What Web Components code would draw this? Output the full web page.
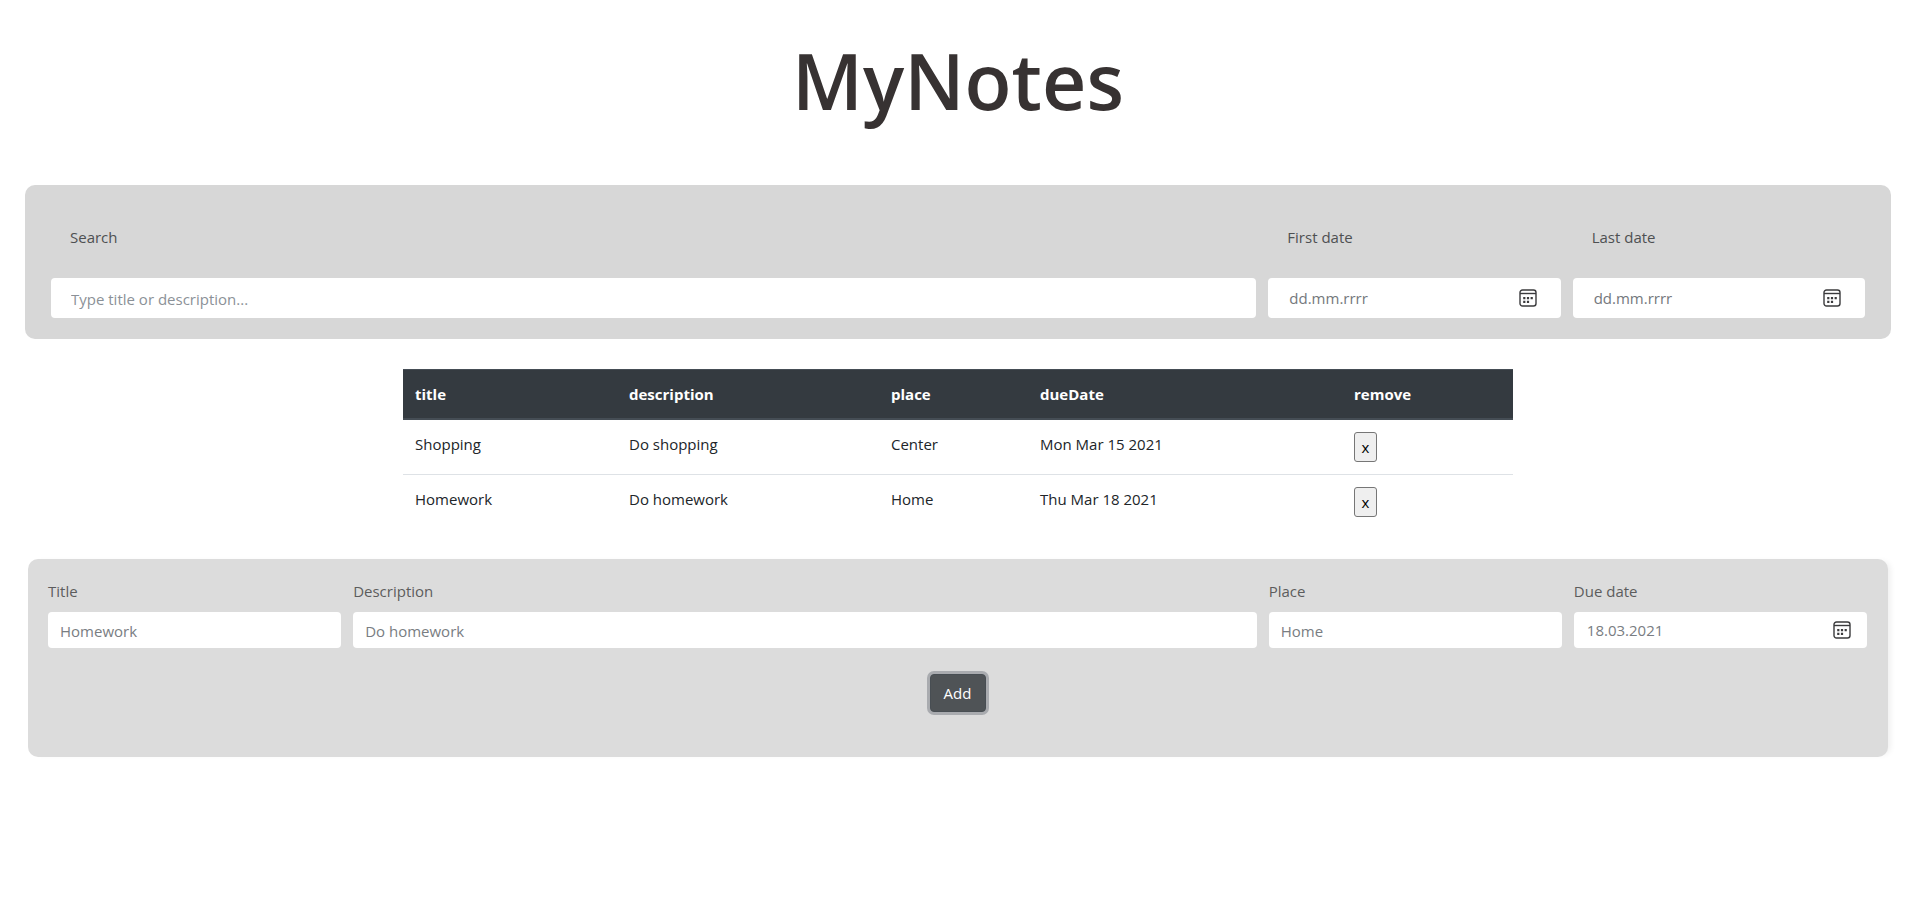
<!DOCTYPE html>
<html lang="en">
<head>
<meta charset="utf-8">
<meta name="viewport" content="width=device-width, initial-scale=1">
<title>MyNotes</title>
<style>
  body {
    margin: 0;
    background: #fff;
    color: #212529;
    font-family: "Open Sans", "Noto Sans", sans-serif;
    font-size: 15px;
    line-height: 24px;
  }
</style>
</head>
<body>
<notes-app></notes-app>

<template id="notes-app">
  <style>
    :host { display: block; padding: 33px 26px 40px 25px; }
    h1 {
      margin: 0 0 56px;
      font-size: 77px;
      line-height: 96px;
      font-weight: 600;
      text-align: center;
      color: #373232;
    }
    notes-table { margin: 30px auto; }
    .wide { grid-column: span 8; }
    .mid { grid-column: span 6; }
    .narrow { grid-column: span 2; }
    notes-panel.search { --panel-bg: #d7d7d7; --panel-padding: 40px 26px 21px; }
    notes-panel.search > * {
      --label-inset: 19px; --label-gap: 29px; --label-color: #4e5052;
      --field-height: 40px; --field-inset: 20px; --icon-inset: 24px;
    }
    notes-panel.add {
      --panel-bg: #dcdcdc; --panel-padding: 20px 21px 45px 20px;
      --panel-shadow: 5px 0 6px -3px #ededed;
      margin: 0 3px;
    }
    notes-panel.add > * { --label-color: #5c5c5d; }
  </style>
  <h1>MyNotes</h1>
  <notes-panel class="search">
    <text-field class="wide" label="Search" placeholder="Type title or description..."></text-field>
    <date-field class="narrow" label="First date" placeholder="dd.mm.rrrr"></date-field>
    <date-field class="narrow" label="Last date" placeholder="dd.mm.rrrr"></date-field>
  </notes-panel>
  <notes-table></notes-table>
  <notes-panel class="add">
    <text-field class="narrow" label="Title" value="Homework"></text-field>
    <text-field class="mid" label="Description" value="Do homework"></text-field>
    <text-field class="narrow" label="Place" value="Home"></text-field>
    <date-field class="narrow" label="Due date" value="18.03.2021"></date-field>
    <add-button slot="actions">Add</add-button>
  </notes-panel>
</template>

<template id="notes-panel">
  <style>
    :host {
      display: block;
      padding: var(--panel-padding);
      border-radius: 10px;
      background: var(--panel-bg);
      box-shadow: var(--panel-shadow, none);
    }
    .fields {
      display: grid;
      grid-template-columns: repeat(12, minmax(0, 1fr));
      column-gap: 12px;
    }
    .actions { display: flex; justify-content: center; }
  </style>
  <div class="fields"><slot></slot></div>
  <div class="actions"><slot name="actions"></slot></div>
</template>

<template id="text-field">
  <style>
    :host { display: block; }
    label {
      display: block;
      margin-bottom: var(--label-gap, 9px);
      padding-left: var(--label-inset, 0);
      color: var(--label-color);
    }
    .box {
      display: flex;
      align-items: center;
      box-sizing: border-box;
      height: var(--field-height, 36px);
      padding-right: var(--icon-inset, 16px);
      border-radius: 4px;
      background: #fff;
    }
    input {
      flex: 1;
      min-width: 0;
      height: 100%;
      box-sizing: border-box;
      margin: 0;
      border: 0;
      padding: 2px 0 0 var(--field-inset, 12px);
      background: none;
      font: inherit;
      color: #797d82;
      outline: none;
    }
    input::placeholder { color: #8b9197; opacity: 1; }
    .date input { padding-top: 0; padding-left: calc(var(--field-inset, 12px) + 1px); }
    .date input::placeholder { color: #74787c; }
    button {
      display: flex;
      margin: 0;
      border: 0;
      padding: 0;
      background: none;
    }
    svg { display: block; }
  </style>
  <label for="field"></label>
  <div class="box"><input id="field" type="text"></div>
</template>

<template id="calendar-button">
  <button type="button" aria-label="Open calendar">
    <svg width="18" height="18" viewBox="0 0 18 18" fill="none" stroke="#3b3b3d">
      <rect x="1" y="1" width="16" height="16" rx="2.5" stroke-width="1.4"/>
      <path d="M1 4.5H17" stroke-width="1.4"/>
      <path d="M4.2 9.2H6.4M7.9 9.2H10.1M11.6 9.2H13.8M4.2 12.8H6.4M7.9 12.8H10.1" stroke-width="2.2"/>
    </svg>
  </button>
</template>

<template id="notes-table">
  <style>
    :host { display: block; max-width: 1110px; }
    table { width: 100%; table-layout: fixed; border-collapse: collapse; }
    .title { width: 214px; }
    .description { width: 262px; }
    .place { width: 149px; }
    .due { width: 314px; }
    .remove { width: 171px; }
    th, td { padding: 12px; text-align: left; vertical-align: top; }
    th {
      background: #343a40;
      color: #fff;
      font-weight: 700;
      border-top: 1px solid #454d55;
      border-bottom: 2px solid #454d55;
    }
    td { border-top: 1px solid #dee2e6; height: 30px; }
    button {
      display: block;
      width: 23px;
      height: 30px;
      margin: 0;
      border: 1px solid #767676;
      border-radius: 3px;
      padding: 0;
      background: #efefef;
      color: #000;
      font: inherit;
      line-height: 24px;
    }
  </style>
  <table>
    <colgroup><col class="title"><col class="description"><col class="place"><col class="due"><col class="remove"></colgroup>
    <thead>
      <tr><th scope="col">title</th><th scope="col">description</th><th scope="col">place</th><th scope="col">dueDate</th><th scope="col">remove</th></tr>
    </thead>
    <tbody>
      <tr><td>Shopping</td><td>Do shopping</td><td>Center</td><td>Mon Mar 15 2021</td><td><button type="button">x</button></td></tr>
      <tr><td>Homework</td><td>Do homework</td><td>Home</td><td>Thu Mar 18 2021</td><td><button type="button">x</button></td></tr>
    </tbody>
  </table>
</template>

<template id="add-button">
  <style>
    :host { display: block; margin-top: 26px; }
    button {
      display: block;
      margin: 0;
      width: 56px;
      height: 38px;
      border: 1px solid #484e53;
      border-radius: 4px;
      padding: 0;
      background: #4f5356;
      color: #fff;
      font: inherit;
      box-shadow: 0 0 0 3px #a9abaf;
    }
  </style>
  <button type="button"><slot></slot></button>
</template>

<script>
  const clone = id => document.getElementById(id).content.cloneNode(true);

  class TemplateElement extends HTMLElement {
    constructor() {
      super();
      this.attachShadow({ mode: "open" }).append(clone(this.constructor.template));
    }
  }

  class NotesPanel extends TemplateElement { static template = "notes-panel"; }
  class NotesTable extends TemplateElement { static template = "notes-table"; }
  class AddButton extends TemplateElement { static template = "add-button"; }
  class NotesApp extends TemplateElement { static template = "notes-app"; }

  class TextField extends TemplateElement {
    static template = "text-field";
    connectedCallback() {
      const input = this.shadowRoot.querySelector("input");
      this.shadowRoot.querySelector("label").textContent = this.getAttribute("label");
      input.placeholder = this.getAttribute("placeholder") || "";
      input.value = this.getAttribute("value") || "";
    }
  }

  class DateField extends TextField {
    constructor() {
      super();
      const box = this.shadowRoot.querySelector(".box");
      box.classList.add("date");
      box.append(clone("calendar-button"));
    }
  }

  customElements.define("notes-panel", NotesPanel);
  customElements.define("notes-table", NotesTable);
  customElements.define("add-button", AddButton);
  customElements.define("text-field", TextField);
  customElements.define("date-field", DateField);
  customElements.define("notes-app", NotesApp);
</script>
</body>
</html>
